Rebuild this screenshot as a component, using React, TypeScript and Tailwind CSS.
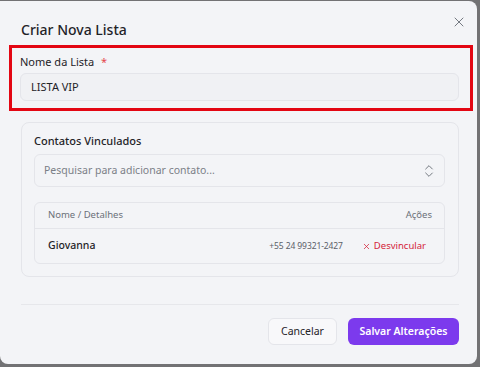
import { X, ChevronsUpDown } from "lucide-react";

export default function App() {
  return (
    <div
      className="w-[480px] h-[367px] bg-[#727274] overflow-hidden"
      style={{ fontFamily: '"Noto Sans", "Open Sans", sans-serif' }}
    >
      <div className="relative mt-px w-[477px] h-[363px] bg-[#f3f4f7] rounded-r-lg rounded-b-lg flex flex-col">
        {/* Header */}
        <div className="pl-[21px] pt-[22px] h-[44px]">
          <h2 className="text-[14px] font-medium text-[#1f2328] leading-none">Criar Nova Lista</h2>
        </div>
        <button className="absolute top-[13px] right-[10px] text-[#6b7079]">
          <X className="w-4 h-4" strokeWidth={1.4} />
        </button>

        {/* Nome da lista (highlighted) */}
        <div className="ml-[9px] mr-[4px] border-[3px] border-[#e30613] pl-[8px] pr-[11px] pt-[8px] pb-[7px]">
          <label className="block text-[11px] text-[#1f2328] leading-none mb-[6px]">
            Nome da Lista <span className="text-[#e5484d] ml-[4px]">*</span>
          </label>
          <div className="h-[28px] rounded-md border border-[#e4e5ea] bg-[#f0f1f4] flex items-center px-[10px] text-[11px] text-[#1f2328]">
            LISTA VIP
          </div>
        </div>

        {/* Contatos */}
        <div className="ml-[21px] mr-[18px] mt-[11px] rounded-lg border border-[#e4e5ea] pl-[12px] pr-[13px] pt-[12px] pb-[12px]">
          <div className="text-[11px] font-medium text-[#1f2328] leading-none mb-[8px]">Contatos Vinculados</div>
          <div className="h-[33px] rounded-md border border-[#e4e5ea] flex items-center justify-between pl-[9px] pr-[7px]">
            <span className="text-[10.5px] text-[#7b7f87]">Pesquisar para adicionar contato...</span>
            <ChevronsUpDown className="w-4 h-4 text-[#6b7079]" strokeWidth={1.4} />
          </div>
          <div className="mt-[15px] rounded-md border border-[#e4e5ea]">
            <div className="h-[26px] flex items-center justify-between pl-[13px] pr-[12px] border-b border-[#e4e5ea] text-[9.5px] text-[#6b7079]">
              <span>Nome / Detalhes</span>
              <span>Ações</span>
            </div>
            <div className="h-[34px] flex items-center justify-between pl-[13px] pr-[18px]">
              <span className="text-[10.5px] font-medium text-[#1f2328]">Giovanna</span>
              <div className="flex items-center">
                <span className="text-[8.5px] tracking-[-0.1px] text-[#5b6069] mr-[19px]">+55 24 99321-2427</span>
                <span className="flex items-center text-[9.5px] text-[#d4233a]">
                  <X className="w-[9px] h-[9px] mr-[3px]" strokeWidth={2} />
                  Desvincular
                </span>
              </div>
            </div>
          </div>
        </div>

        {/* Footer */}
        <div className="ml-[21px] mr-[18px] mt-[27px] border-t border-[#e6e7eb]" />
        <div className="flex justify-end gap-[11px] pr-[18px] pt-[13px]">
          <button className="h-[27px] w-[69px] rounded-md border border-[#e4e5ea] bg-[#f8f8fa] text-[10.5px] text-[#1f2328]">
            Cancelar
          </button>
          <button className="h-[27px] w-[111px] rounded-md bg-[#7c3aed] text-[10.5px] font-semibold text-white">
            Salvar Alterações
          </button>
        </div>
      </div>
    </div>
  );
}
